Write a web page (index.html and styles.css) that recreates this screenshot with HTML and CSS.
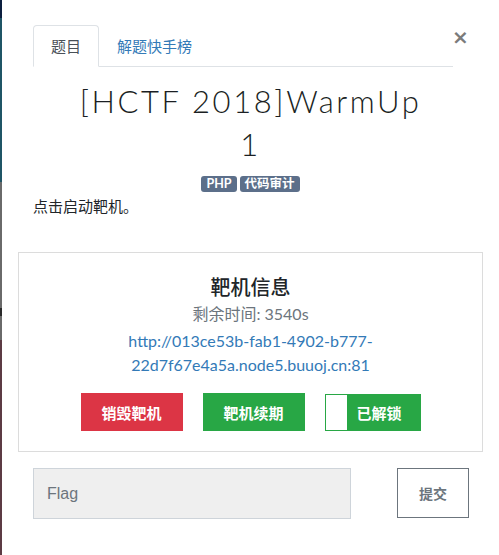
FILE: index.html
```html
<!DOCTYPE html>
<html lang="zh">
<head>
<meta charset="utf-8">
<title>WarmUp</title>
<link rel="stylesheet" href="styles.css">
</head>
<body>
<div class="backdrop"></div>
<div class="modal">
  <div class="modal-header">
    <ul class="tabs">
      <li class="tab active">题目</li>
      <li class="tab">解题快手榜</li>
    </ul>
    <button class="close" type="button">×</button>
  </div>
  <div class="modal-body">
    <h3 class="chal-name">[HCTF 2018]WarmUp<br>1</h3>
    <div class="tags">
      <span class="badge">PHP</span>
      <span class="badge">代码审计</span>
    </div>
    <p class="desc">点击启动靶机。</p>
    <div class="target-box">
      <h4 class="target-title">靶机信息</h4>
      <div class="remain">剩余时间: 3540s</div>
      <a class="target-url" href="#">http://013ce53b-fab1-4902-b777-<br>22d7f67e4a5a.node5.buuoj.cn:81</a>
      <div class="actions">
        <button class="btn btn-red" type="button">销毁靶机</button>
        <button class="btn btn-green" type="button">靶机续期</button>
        <button class="btn btn-toggle" type="button"><span class="knob"></span><span class="toggle-label">已解锁</span></button>
      </div>
    </div>
    <div class="submit-row">
      <input class="flag-input" type="text" placeholder="Flag">
      <button class="btn-submit" type="button">提交</button>
    </div>
  </div>
</div>
</body>
</html>
```
FILE: styles.css
```css
html, body {
  margin: 0;
  padding: 0;
  height: 100%;
  background: #fff;
}
body {
  display: flex;
  font-family: Lato, "Noto Sans CJK SC", sans-serif;
  color: #212529;
}
.backdrop {
  width: 2px;
  flex: 0 0 2px;
  background: linear-gradient(to bottom,
    #0c1f3f 0, #0c1f3f 18px,
    #1f5566 18px, #1f5566 182px,
    #6a6a6a 182px, #6a6a6a 308px,
    #2a2a2a 308px, #2a2a2a 316px,
    #6a6a6a 316px, #6a6a6a 340px,
    #5c3b44 340px, #5c3b44 100%);
}
.modal {
  flex: 1;
  padding: 0 16px;
}
.modal-header {
  display: flex;
  align-items: flex-start;
  padding: 25px 0 0 15px;
}
.tabs {
  flex: 0 0 420px;
  display: flex;
  margin: 0;
  padding: 0;
  list-style: none;
  border-bottom: 1px solid #dee2e6;
}
.tab {
  padding: 0 17px;
  height: 40px;
  line-height: 40px;
  font-size: 15px;
  color: #337ab7;
  border: 1px solid transparent;
  border-radius: 4px 4px 0 0;
  margin-bottom: -1px;
}
.tab.active {
  color: #495057;
  background: #fff;
  border-color: #dee2e6 #dee2e6 #fff;
}
.close {
  margin: 2px 0 0 -1px;
  padding: 0;
  width: 13px;
  border: 0;
  background: none;
  font-family: "DejaVu Sans", sans-serif;
  font-size: 20px;
  font-weight: bold;
  line-height: 20px;
  color: #7b7b7b;
}
.modal-body {
  display: flex;
  flex-direction: column;
}
.chal-name {
  margin: 13px auto 0;
  font-family: Lato, sans-serif;
  font-weight: 300;
  font-size: 31px;
  line-height: 43px;
  letter-spacing: 2.6px;
  text-align: center;
  color: #1b1f23;
}
.tags {
  display: flex;
  justify-content: center;
  gap: 3px;
  margin-top: 10px;
}
.badge {
  background: #5c6f8a;
  color: #fff;
  font-size: 12.5px;
  font-weight: bold;
  line-height: 16px;
  padding: 0 5px;
  border-radius: 3px;
}
.desc {
  margin: 2px 0 0 15px;
  font-size: 15px;
  line-height: 24px;
  color: #212529;
}
.target-box {
  margin-top: 34px;
  border: 1px solid #dcdcdc;
  height: 198px;
  display: flex;
  flex-direction: column;
  align-items: center;
}
.target-title {
  margin: 22px 0 0;
  font-size: 20px;
  font-weight: 500;
  line-height: 24px;
  color: #212529;
}
.remain {
  margin-top: 4px;
  font-size: 16px;
  line-height: 22px;
  color: #6c757d;
}
.target-url {
  margin-top: 4px;
  font-size: 16px;
  line-height: 24px;
  color: #337ab7;
  text-decoration: none;
  text-align: center;
}
.actions {
  display: flex;
  gap: 20px;
  margin-top: 16px;
  align-items: flex-start;
}
.btn {
  height: 38px;
  border: 0;
  padding: 0;
  font-family: "Noto Sans CJK SC", sans-serif;
  font-size: 15px;
  font-weight: bold;
  color: #fff;
  cursor: pointer;
}
.btn-red {
  width: 102px;
  background: #dc3545;
}
.btn-green {
  width: 102px;
  background: #28a745;
}
.btn-toggle {
  width: 96px;
  height: 37px;
  margin-top: 1px;
  display: flex;
  align-items: stretch;
  background: #28a745;
  border: 1px solid #28a745;
}
.knob {
  width: 21px;
  background: #fff;
}
.toggle-label {
  flex: 1;
  display: flex;
  align-items: center;
  justify-content: center;
  padding-right: 8px;
}
.submit-row {
  display: flex;
  justify-content: space-between;
  margin: 16px 14px 0 15px;
}
.flag-input {
  box-sizing: border-box;
  width: 318px;
  height: 51px;
  margin: 0;
  padding: 0 13px;
  border: 1px solid #ced4da;
  background: #efefef;
  font-family: "Liberation Sans", sans-serif;
  font-size: 16px;
  color: #495057;
}
.flag-input::placeholder {
  color: #6c757d;
}
.btn-submit {
  box-sizing: border-box;
  width: 72px;
  height: 50px;
  border: 1px solid #6c757d;
  background: #fff;
  font-family: "Noto Sans CJK SC", sans-serif;
  font-size: 14px;
  font-weight: bold;
  color: #6c757d;
}
```
